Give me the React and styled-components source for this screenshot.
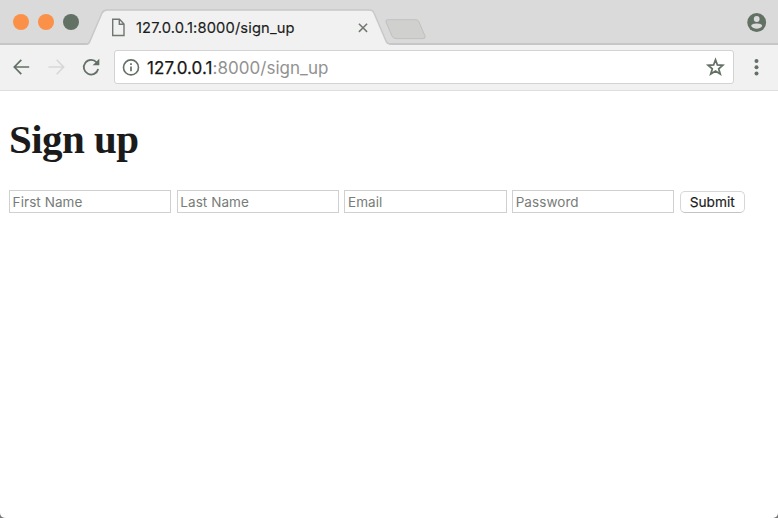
import React from "react";
import styled, { createGlobalStyle } from "styled-components";

const GlobalStyle = createGlobalStyle`
  * { box-sizing: border-box; }
  html, body { margin: 0; padding: 0; background: #777; overflow: hidden; }
  svg { display: block; flex: none; }
`;

const Window = styled.div`
  width: 778px;
  height: 518px;
  display: flex;
  flex-direction: column;
  overflow: hidden;
  background: #fff;
  border-radius: 0 0 5px 5px;
  font-family: Inter, "Liberation Sans", sans-serif;
`;

const TabStrip = styled.header`
  height: 45px;
  flex: none;
  display: flex;
  background: #dadada;
  box-shadow: inset 0 -2px 0 #c6c6c6;
`;

const TrafficLights = styled.div`
  width: 87px;
  height: 45px;
  padding: 14px 0 0 13px;
  display: flex;
  gap: 9px;
`;

const Light = styled.span`
  width: 16px;
  height: 16px;
  border-radius: 50%;
  background: ${(p) => p.$color};
`;

const Tab = styled.div`
  position: relative;
  width: 304px;
  height: 45px;
  display: flex;
  align-items: center;
  padding: 10px 0 0 24px;
`;

const TabShape = styled.svg`
  position: absolute;
  inset: 0;
`;

const TabContent = styled.div`
  position: relative;
  display: flex;
  align-items: center;
  width: 100%;
`;

const TabTitle = styled.span`
  margin-left: 10px;
  width: 221px;
  font-size: 14.7px;
  line-height: 20px;
  letter-spacing: 0.14px;
  color: #1c1c1c;
  -webkit-text-stroke: 0.15px #1c1c1c;
  white-space: nowrap;
`;

const NewTab = styled.svg`
  margin: 18px 0 0 -7px;
`;

const Profile = styled.div`
  margin: 12px 11px 0 auto;
`;

const Toolbar = styled.nav`
  height: 46px;
  flex: none;
  display: flex;
  align-items: flex-start;
  padding-top: 5px;
  background: #f1f1f1;
  border-bottom: 1px solid #dedede;
`;

const NavIcons = styled.div`
  width: 114px;
  height: 34px;
  display: flex;
  align-items: center;
  padding-left: 12px;
  gap: 15.5px;
`;

const AddressBar = styled.div`
  width: 620px;
  height: 34px;
  display: flex;
  align-items: center;
  padding: 0 8px 0 7px;
  background: #fff;
  border: 1px solid #d3d3d3;
  border-radius: 3px;
`;

const Url = styled.span`
  flex: 1;
  margin-left: 7px;
  padding-top: 1px;
  font-size: 17px;
  line-height: 22px;
  letter-spacing: 0.03px;
  color: #929292;
  white-space: nowrap;
`;

const Host = styled.span`
  color: #171717;
  letter-spacing: 0.1px;
  -webkit-text-stroke: 0.25px #171717;
`;

const Menu = styled.div`
  margin: 8px 0 0 20px;
`;

const Page = styled.main`
  flex: 1;
  padding: 23px 9px;
`;

const Heading = styled.h1`
  margin: 0;
  font: bold 41px/50px "Liberation Serif", serif;
  letter-spacing: -0.55px;
  color: #1b1b1b;
`;

const Form = styled.form`
  display: flex;
  align-items: flex-start;
  gap: 5.5px;
  margin-top: 26px;
`;

const Field = styled.input`
  width: 162.2px;
  height: 23px;
  padding: 1px 2px 0 2.6px;
  border: 1px solid #d0d0d0;
  border-radius: 0;
  background: #fff;
  font: 13.5px/20px Inter, "Liberation Sans", sans-serif;
  letter-spacing: 0.07px;
  outline: none;
  &::placeholder { color: #777c78; opacity: 1; }
`;

const Submit = styled.button`
  width: 65px;
  height: 22px;
  margin-top: 1px;
  padding: 0;
  border: 1px solid #d7d7d7;
  border-bottom-color: #c3c3c3;
  border-radius: 5px;
  background: #fff;
  color: #1b1b1b;
  font: 13.7px/20px Inter, "Liberation Sans", sans-serif;
  -webkit-text-stroke: 0.15px #1b1b1b;
`;

const INK = "#637064";
const fields = [
  { label: "First Name", type: "text" },
  { label: "Last Name", type: "text" },
  { label: "Email", type: "email" },
  { label: "Password", type: "password" },
];

export default function App() {
  return (
    <>
      <GlobalStyle />
      <Window>
        <TabStrip>
          <TrafficLights>
            <Light $color="#fb9149" />
            <Light $color="#fb9149" />
            <Light $color="#637064" />
          </TrafficLights>
          <Tab>
            <TabShape width="304" height="45" viewBox="0 0 304 45">
              <path d="M0 45 Q2 44 3 41 L15 13 Q17 10 20 10 H282 Q286 10 287 13 L299 41 Q300 44 304 45Z" fill="#f1f1f1" />
              <path d="M0 44 Q2 44 3 41 L15 13 Q17 10 20 10 H282 Q286 10 287 13 L299 41 Q300 44 304 44" fill="none" stroke="#c8c8c8" strokeWidth="1.5" />
            </TabShape>
            <TabContent>
              <svg width="15" height="19" viewBox="0 0 15 19" fill="none" stroke="#6f7770" strokeWidth="1.4">
                <path d="M1.7 1.2H8.5L13 6V17.5H1.7Z M8.3 1.4V6.3H13" />
              </svg>
              <TabTitle>127.0.0.1:8000/sign_up</TabTitle>
              <svg width="12" height="12" viewBox="0 0 12 12" stroke="#737873" strokeWidth="1.5">
                <path d="M1.9 1.7 10.1 9.9M10.1 1.7 1.9 9.9" />
              </svg>
            </TabContent>
          </Tab>
          <NewTab width="45" height="23" viewBox="0 0 45 23">
            <path d="M4 1.7H32Q34 1.7 35 4L41 18Q42 20.6 39 20.6H12Q9 20.6 8 18L2 4Q1 1.7 4 1.7Z" fill="#d0d0ce" stroke="#c0c0c0" />
          </NewTab>
          <Profile>
            <svg width="20" height="20" viewBox="0 0 20 20">
              <circle cx="9.7" cy="10.5" r="9.4" fill={INK} />
              <circle cx="9.7" cy="7" r="2.9" fill="#dadada" />
              <path d="M4.2 14C4.2 12 7.3 11.4 9.7 11.4S15.2 12 15.2 14C14 15.8 12.1 16.7 9.7 16.7S5.4 15.8 4.2 14Z" fill="#dadada" />
            </svg>
          </Profile>
        </TabStrip>
        <Toolbar>
          <NavIcons>
            <svg width="19" height="18" viewBox="0 0 19 18" fill="none" stroke={INK} strokeWidth="1.7">
              <path d="M17.2 9H2.5M9.3 1.8 2.3 9 9.3 16.2" />
            </svg>
            <svg width="19" height="18" viewBox="0 0 19 18" fill="none" stroke="#d7d7d7" strokeWidth="1.6">
              <path d="M1.5 9H16.5M9.7 1.8 16.7 9 9.7 16.2" />
            </svg>
            <svg width="20" height="20" viewBox="0 0 20 20">
              <path d="M15.7 5.5A7.3 7.3 0 1 0 17.2 12" fill="none" stroke={INK} strokeWidth="1.8" />
              <path d="M18.3 1.7V8.3H11.7Z" fill={INK} />
            </svg>
          </NavIcons>
          <AddressBar>
            <svg width="18" height="18" viewBox="0 0 18 18">
              <circle cx="9" cy="9.4" r="7.5" fill="none" stroke={INK} strokeWidth="1.6" />
              <path d="M9 8.4V13.3M9 5.2V6.9" stroke={INK} strokeWidth="1.7" />
            </svg>
            <Url><Host>127.0.0.1</Host>:8000/sign_up</Url>
            <svg width="20" height="20" viewBox="0 0 20 20">
              <path d="M10.5 2.8 12.4 8 17.8 8.3 13.7 11.8 15.2 17 10.5 14 5.8 17 7.3 11.8 3.2 8.3 8.6 8Z" fill="none" stroke={INK} strokeWidth="1.8" />
            </svg>
          </AddressBar>
          <Menu>
            <svg width="5" height="18" viewBox="0 0 5 18" fill={INK}>
              <circle cx="2.5" cy="3" r="2" />
              <circle cx="2.5" cy="9.2" r="2" />
              <circle cx="2.5" cy="15.4" r="2" />
            </svg>
          </Menu>
        </Toolbar>
        <Page>
          <Heading>Sign up</Heading>
          <Form onSubmit={(e) => e.preventDefault()}>
            {fields.map((f) => (
              <Field key={f.label} type={f.type} placeholder={f.label} />
            ))}
            <Submit type="submit">Submit</Submit>
          </Form>
        </Page>
      </Window>
    </>
  );
}
